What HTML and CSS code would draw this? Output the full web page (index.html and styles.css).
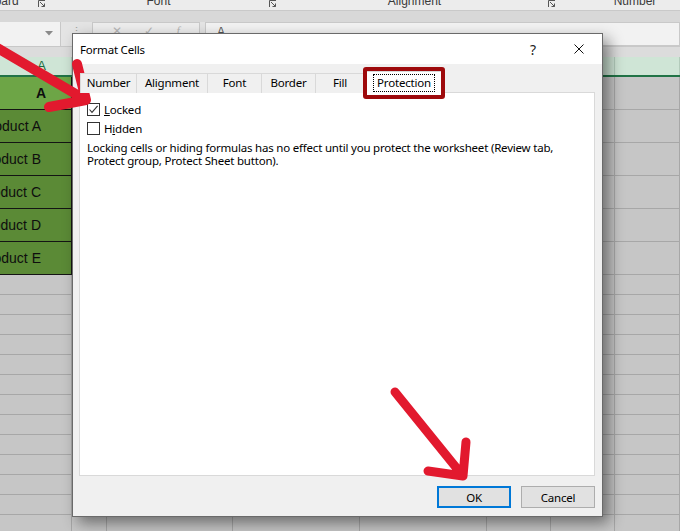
FILE: index.html
```html
<!DOCTYPE html>
<html lang="en">
<head>
    <meta charset="UTF-8">
    <title>Format Cells - Protection</title>
    <link rel="stylesheet" href="styles.css">
</head>
<body>
    <div class="app">
        <!-- Ribbon group labels (cut off at top) -->
        <div class="ribbon">
            <div class="rgroup clip"><span class="rlabel">Clipboard</span><svg class="launcher" viewBox="0 0 8 8"><path d="M0.5 7V0.5H7M2 2L6.5 6.5M6.5 3.5V6.5H3.5"/></svg></div>
            <div class="rgroup font-g"><span class="rlabel">Font</span><svg class="launcher" viewBox="0 0 8 8"><path d="M0.5 7V0.5H7M2 2L6.5 6.5M6.5 3.5V6.5H3.5"/></svg></div>
            <div class="rgroup align-g"><span class="rlabel">Alignment</span><svg class="launcher" viewBox="0 0 8 8"><path d="M0.5 7V0.5H7M2 2L6.5 6.5M6.5 3.5V6.5H3.5"/></svg></div>
            <div class="rgroup num-g"><span class="rlabel">Number</span></div>
        </div>
        <div class="band"></div>

        <!-- Formula bar -->
        <div class="formula-bar">
            <div class="name-box"><svg class="caret" viewBox="0 0 8 5"><path d="M0 0H8L4 4.5Z"/></svg></div>
            <div class="fx-dots">⋮</div>
            <div class="fx-btns"><span>✕</span><span>✓</span><span class="fx">f</span></div>
            <div class="fx-input">A</div>
        </div>
        <div class="sheet-gap"></div>

        <!-- Sheet -->
        <div class="sheet">
            <div class="row col-head">
                <div class="cell c-a"><span class="head-a">A</span></div>
                <div class="cell c-b"></div>
                <div class="cell c-c"></div>
                <div class="cell c-d"></div>
                <div class="cell c-e"></div>
                <div class="cell c-f"></div>
                <div class="cell c-g">G</div>
                <div class="cell c-h"></div>
            </div>
            <div class="row big head-row">
                <div class="cell c-a"><span class="cell-text">A</span></div>
                <div class="cell c-b"></div><div class="cell c-c"></div><div class="cell c-d"></div><div class="cell c-e"></div><div class="cell c-f"></div><div class="cell c-g"></div><div class="cell c-h"></div>
            </div>
            <div class="row big">
                <div class="cell c-a"><span class="cell-text">Product A</span></div>
                <div class="cell c-b"></div><div class="cell c-c"></div><div class="cell c-d"></div><div class="cell c-e"></div><div class="cell c-f"></div><div class="cell c-g"></div><div class="cell c-h"></div>
            </div>
            <div class="row big">
                <div class="cell c-a"><span class="cell-text">Product B</span></div>
                <div class="cell c-b"></div><div class="cell c-c"></div><div class="cell c-d"></div><div class="cell c-e"></div><div class="cell c-f"></div><div class="cell c-g"></div><div class="cell c-h"></div>
            </div>
            <div class="row big">
                <div class="cell c-a"><span class="cell-text">Product C</span></div>
                <div class="cell c-b"></div><div class="cell c-c"></div><div class="cell c-d"></div><div class="cell c-e"></div><div class="cell c-f"></div><div class="cell c-g"></div><div class="cell c-h"></div>
            </div>
            <div class="row big">
                <div class="cell c-a"><span class="cell-text">Product D</span></div>
                <div class="cell c-b"></div><div class="cell c-c"></div><div class="cell c-d"></div><div class="cell c-e"></div><div class="cell c-f"></div><div class="cell c-g"></div><div class="cell c-h"></div>
            </div>
            <div class="row big">
                <div class="cell c-a"><span class="cell-text">Product E</span></div>
                <div class="cell c-b"></div><div class="cell c-c"></div><div class="cell c-d"></div><div class="cell c-e"></div><div class="cell c-f"></div><div class="cell c-g"></div><div class="cell c-h"></div>
            </div>
            <div id="emptyRows"></div>
        </div>
    </div>

    <!-- Format Cells dialog -->
    <div class="dialog">
        <div class="title-bar">
            <span class="title">Format Cells</span>
            <span class="cap-btn help">?</span>
            <span class="cap-btn close"><svg viewBox="0 0 10 10"><path d="M0.5 0.5L9.5 9.5M9.5 0.5L0.5 9.5"/></svg></span>
        </div>
        <div class="dlg-body">
            <div class="tabs">
                <div class="tab t-number">Number</div>
                <div class="tab t-align">Alignment</div>
                <div class="tab t-font">Font</div>
                <div class="tab t-border">Border</div>
                <div class="tab t-fill">Fill</div>
                <div class="tab active"><span class="focus">Protection</span><span class="highlight"></span></div>
            </div>
            <div class="panel">
                <label class="check-row">
                    <span class="box"><svg viewBox="0 0 11 11"><path d="M1.5 5.5L4 8.3L9.6 1.8"/></svg></span>
                    <span><u>L</u>ocked</span>
                </label>
                <label class="check-row">
                    <span class="box"></span>
                    <span>H<u>i</u>dden</span>
                </label>
                <p class="note">Locking cells or hiding formulas has no effect until you protect the worksheet (Review tab,<br>Protect group, Protect Sheet button).</p>
            </div>
            <div class="btn-row">
                <button class="btn ok">OK</button>
                <button class="btn">Cancel</button>
            </div>
        </div>
    </div>

    <!-- Red annotation arrows -->
    <svg class="arrows" viewBox="0 0 680 531">
        <g fill="none" stroke="#e2192e" stroke-linecap="round" stroke-linejoin="round">
            <path stroke-width="10" d="M-6 46L86 100M77 64L86 100L49 107"/>
            <path stroke-width="9" d="M395 392L463 476M466 442L463 476L428 471"/>
        </g>
    </svg>

    <script>
        // filas vacias bajo los productos
        const emptyRows = document.getElementById('emptyRows');
        const cols = ['c-a', 'c-b', 'c-c', 'c-d', 'c-e', 'c-f', 'c-g', 'c-h'];
        for (let i = 0; i < 13; i++) {
            const row = document.createElement('div');
            row.className = 'row small';
            row.innerHTML = cols.map(c => `<div class="cell ${c}"></div>`).join('');
            emptyRows.appendChild(row);
        }
    </script>
</body>
</html>
```

FILE: styles.css
```css
* {
    box-sizing: border-box;
}
body {
    margin: 0;
    width: 680px;
    height: 531px;
    overflow: hidden;
    position: relative;
    background: #c6c6c6;
    font-family: "Liberation Sans", Arial, sans-serif;
}

/* ---- excel background ---- */
.ribbon {
    height: 11px;
    background: #ececec;
    border-bottom: 1px solid #c9c9c9;
    display: flex;
    overflow: hidden;
    font-size: 12px;
    color: #3a3a3a;
}
.rgroup {
    display: flex;
    align-items: flex-start;
    flex-shrink: 0;
    padding-right: 4px;
}
.rlabel {
    flex: 1;
    text-align: center;
    white-space: nowrap;
    line-height: 16px;
    margin-top: -7px;
}
.launcher {
    width: 8px;
    height: 8px;
    fill: none;
    stroke: #555;
    stroke-width: 1;
}
.clip {
    width: 100px;
    margin-left: -52px;
    padding-right: 2px;
}
.font-g {
    width: 233px;
}
.align-g {
    width: 279px;
}
.num-g {
    width: 154px;
}
.band {
    height: 11px;
    background: #d8d8d8;
}
.formula-bar {
    height: 25px;
    background: #e4e4e4;
    border-bottom: 1px solid #c8c8c8;
    display: flex;
}
.name-box {
    width: 61px;
    background: #f2f2f2;
    border-right: 1px solid #c8c8c8;
    display: flex;
    justify-content: flex-end;
    padding: 9px 7px 0 0;
}
.caret {
    width: 8px;
    height: 5px;
    fill: #8a8a8a;
}
.fx-dots {
    width: 31px;
    text-align: center;
    color: #a0a0a0;
    font-size: 11px;
    line-height: 18px;
}
.fx-btns {
    width: 108px;
    background: #ededed;
    border: 1px solid #c9c9c9;
    display: flex;
    justify-content: space-around;
    color: #b5b5b5;
    font-size: 12px;
    line-height: 16px;
    padding: 0 8px;
}
.fx {
    font-style: italic;
    font-family: "Liberation Serif", serif;
}
.fx-input {
    flex: 1;
    margin-left: 5px;
    background: #f2f2f2;
    border: 1px solid #c9c9c9;
    padding-left: 11px;
    font-size: 12px;
    line-height: 18px;
    color: #555;
}
.sheet-gap {
    height: 10px;
    background: #dcdcdc;
}
.row {
    display: flex;
}
.cell {
    flex-shrink: 0;
    border-right: 1px solid #a7a7a7;
    border-bottom: 1px solid #a7a7a7;
}
.c-a { width: 72px; }
.c-b { width: 35px; }
.c-c { width: 126px; }
.c-d { width: 127px; }
.c-e { width: 127px; }
.c-f { width: 64px; }
.c-g { width: 64px; }
.c-h { width: 65px; }

.col-head {
    border-bottom: 2px solid #217346;
}
.col-head .cell {
    height: 18px;
    background: #cfe5d6;
    border-bottom: none;
    border-right-color: #b3cbbb;
    color: #1f6d40;
    font-size: 13px;
    line-height: 18px;
    text-align: center;
}
.col-head .c-a {
    text-align: right;
    padding-right: 25px;
}
.big .cell {
    height: 33px;
}
.small .cell {
    height: 20px;
}
.big .c-a {
    background: #5b8a36;
    border-color: #141414;
    display: flex;
    align-items: center;
    justify-content: flex-end;
    padding-right: 30px;
    overflow: hidden;
    font-size: 14px;
    color: #0e0e0e;
}
.head-row .c-a {
    background: #6da546;
    font-weight: bold;
    padding-right: 25px;
}
.cell-text {
    white-space: nowrap;
}

/* ---- dialog ---- */
.dialog {
    position: absolute;
    left: 72px;
    top: 33px;
    width: 531px;
    height: 484px;
    border: 1px solid #6a6a6a;
    background: #f0f0f0;
    box-shadow: 6px 6px 14px rgba(0, 0, 0, 0.45);
    display: flex;
    flex-direction: column;
    font-family: "Noto Sans", sans-serif;
    font-size: 11.5px;
    letter-spacing: -0.2px;
    color: #000;
}
.title-bar {
    height: 30px;
    background: #fff;
    display: flex;
    align-items: center;
    padding-left: 7px;
}
.title {
    flex: 1;
}
.cap-btn {
    width: 46px;
    height: 30px;
    display: flex;
    align-items: center;
    justify-content: center;
}
.help {
    font-size: 14px;
    color: #222;
}
.close svg {
    width: 10px;
    height: 10px;
    stroke: #111;
    stroke-width: 1;
}
.dlg-body {
    flex: 1;
    padding: 9px 7px 0 6px;
    display: flex;
    flex-direction: column;
}
.tabs {
    display: flex;
    height: 19px;
    margin-left: 2px;
    position: relative;
    z-index: 1;
}
.tab {
    height: 20px;
    border: 1px solid #d9d9d9;
    border-bottom: none;
    margin-left: -1px;
    background: #f0f0f0;
    text-align: center;
    line-height: 18px;
}
.t-number { width: 57px; }
.t-align { width: 72px; }
.t-font { width: 55px; }
.t-border { width: 55px; }
.t-fill { width: 50px; }
.tab.active {
    width: 78px;
    height: 22px;
    margin-top: -2px;
    margin-left: 0;
    background: #fff;
    position: relative;
    padding-top: 2px;
    line-height: 16px;
}
.focus {
    display: inline-block;
    border: 1px dotted #000;
    padding: 0 3px;
}
.highlight {
    position: absolute;
    left: -3px;
    right: -3px;
    top: -5px;
    bottom: -6px;
    border: 4px solid #9e0a0c;
    border-radius: 3px;
}
.panel {
    height: 384px;
    background: #fff;
    border: 1px solid #d9d9d9;
    padding: 10px 7px 0 7px;
}
.check-row {
    display: flex;
    align-items: center;
    gap: 4px;
    height: 13px;
    margin-bottom: 6px;
}
.box {
    width: 13px;
    height: 13px;
    border: 1px solid #333;
    background: #fff;
}
.box svg {
    display: block;
    width: 11px;
    height: 11px;
    fill: none;
    stroke: #333;
    stroke-width: 1.1;
}
.note {
    margin: 4px 0 0;
    line-height: 13px;
    white-space: nowrap;
}
.btn-row {
    display: flex;
    justify-content: flex-end;
    gap: 10px;
    margin-top: 10px;
}
.btn {
    width: 74px;
    height: 22px;
    background: #e1e1e1;
    border: 1px solid #adadad;
    font-family: "Noto Sans", sans-serif;
    font-size: 11.5px;
    letter-spacing: -0.2px;
    color: #000;
    padding: 0;
}
.btn.ok {
    border: 2px solid #0078d7;
}

/* ---- annotation ---- */
.arrows {
    position: absolute;
    left: 0;
    top: 0;
    width: 680px;
    height: 531px;
    pointer-events: none;
}
```
